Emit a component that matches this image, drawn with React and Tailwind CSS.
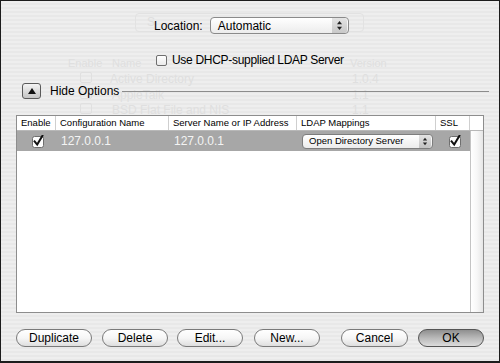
import React from 'react';

const font = "font-['Liberation_Sans',Arial,sans-serif]";

const Check = ({ checked }) => (
  <svg width="13" height="13" viewBox="0 0 13 13" className="block">
    <rect x="0.5" y="1.5" width="11" height="11" rx="2" fill="#fdfdfd" stroke="#6f6f6f" />
    {checked && (
      <path d="M2.6 6.4 L5.2 9.6 L10.4 0.8" fill="none" stroke="#111" strokeWidth="2" strokeLinecap="square" />
    )}
  </svg>
);

const Arrows = ({ w = 7 }) => (
  <svg width={w} height="11" viewBox="0 0 7 11" className="block">
    <path d="M3.5 1 L6 4.2 L1 4.2 Z" fill="#222" />
    <path d="M3.5 10 L6 6.8 L1 6.8 Z" fill="#222" />
  </svg>
);

const Button = ({ children, w, dark, className = '' }) => (
  <div
    className={`h-[18px] rounded-full border flex items-center justify-center text-[12px] text-black shrink-0 ${
      dark
        ? 'border-[#555] bg-gradient-to-b from-[#8f8f8f] via-[#b9b9b9] to-[#dcdcdc]'
        : 'border-[#7a7a7a] bg-gradient-to-b from-[#ffffff] via-[#f6f6f6] to-[#dedede]'
    } ${w} ${className}`}
  >
    {children}
  </div>
);

const Ghost = () => (
  <div className="absolute inset-0 text-[12px] text-[#dfdfdf] pointer-events-none">
    <div className="absolute left-[134px] top-[12px] w-[229px] h-[19px] rounded-[4px] border border-[#e2e2e2] text-[12px] pl-[11px] leading-[17px]">S</div>
    <div className="absolute left-[67px] top-[54px] text-[11px]">Enable</div>
    <div className="absolute left-[111px] top-[54px] text-[11px]">Name</div>
    <div className="absolute left-[349px] top-[54px] text-[11px]">Version</div>
    <div className="absolute left-[79px] top-[71px] w-[12px] h-[11px] border border-[#e0e0e0] rounded-[2px]" />
    <div className="absolute left-[109px] top-[69px]">Active Directory</div>
    <div className="absolute left-[351px] top-[69px]">1.0.4</div>
    <div className="absolute left-[79px] top-[87px] w-[12px] h-[11px] border border-[#e0e0e0] rounded-[2px]" />
    <div className="absolute left-[111px] top-[85px]">AppleTalk</div>
    <div className="absolute left-[351px] top-[85px]">1.1</div>
    <div className="absolute left-[79px] top-[102px] w-[12px] h-[11px] border border-[#e0e0e0] rounded-[2px]" />
    <div className="absolute left-[111px] top-[100px]">BSD Flat File and NIS</div>
    <div className="absolute left-[351px] top-[100px]">1.1</div>
  </div>
);

const cols = [
  { label: 'Enable', w: 'w-[39px]' },
  { label: 'Configuration Name', w: 'w-[113px]' },
  { label: 'Server Name or IP Address', w: 'w-[128px]' },
  { label: 'LDAP Mappings', w: 'w-[139px]' },
  { label: 'SSL', w: 'w-[34px]' },
];

export default function App() {
  return (
    <div
      className={`${font} w-[500px] h-[363px] relative overflow-hidden border-t border-x border-b-2 border-[#1c1c1c] bg-[repeating-linear-gradient(180deg,#eeeeee_0px,#eeeeee_2px,#e8e8e8_2px,#e8e8e8_4px)]`}
    >
      <Ghost />

      <div className="relative flex flex-col">
        {/* location */}
        <div className="flex items-center mt-[16px] pl-[153px] h-[17px]">
          <span className="text-[12px] text-black">Location:</span>
          <div className="ml-[7px] w-[139px] h-[17px] rounded-[4px] border border-[#8a8a8a] bg-gradient-to-b from-white to-[#ececec] flex items-center">
            <span className="pl-[7px] text-[12px] text-black flex-1">Automatic</span>
            <div className="w-[15px] h-[15px] mr-[1px] rounded-r-[3px] bg-gradient-to-b from-[#e4e4e4] to-[#c8c8c8] flex items-center justify-center">
              <Arrows />
            </div>
          </div>
        </div>

        {/* dhcp */}
        <div className="flex items-center mt-[20px] pl-[155px] h-[12px]">
          <div className="w-[11px] h-[11px] rounded-[2px] border border-[#6f6f6f] bg-gradient-to-b from-white to-[#eaeaea]" />
          <span className="ml-[5px] text-[12px] tracking-[-0.3px] text-black">Use DHCP-supplied LDAP Server</span>
        </div>

        {/* hide options */}
        <div className="flex items-center mt-[17px] pl-[21px] pr-[10px] h-[16px]">
          <div className="w-[19px] h-[16px] rounded-[3px] border border-[#5a5a5a] bg-gradient-to-b from-[#f4f4f4] to-[#c4c4c4] flex items-center justify-center">
            <svg width="8" height="6" viewBox="0 0 8 6"><path d="M4 0 L8 6 L0 6 Z" fill="#111" /></svg>
          </div>
          <span className="ml-[9px] text-[12px] text-black">Hide Options</span>
          <div className="flex-1 ml-[3px] h-px bg-[#8c8c8c]" />
        </div>

        {/* table */}
        <div className="mt-[16px] ml-[15px] w-[468px] h-[198px] border border-[#8d8d8d] bg-white flex flex-col">
          <div className="flex h-[15px] border-b border-[#b8b8b8] text-[9.5px] text-black leading-[14px]">
            {cols.map((c) => (
              <div key={c.label} className={`${c.w} shrink-0 border-r border-[#cfcfcf] pl-[4px] whitespace-nowrap overflow-hidden`}>
                {c.label}
              </div>
            ))}
            <div className="flex-1" />
          </div>
          <div className="flex flex-1">
            <div className="w-[453px] shrink-0">
              <div className="flex items-center h-[20px] bg-[#a7a7a7] text-[12px] text-[#f4f4f4]">
                <div className="w-[39px] shrink-0 flex justify-center pl-[3px]"><Check checked /></div>
                <div className="w-[113px] shrink-0 pl-[5px]">127.0.0.1</div>
                <div className="w-[128px] shrink-0 pl-[5px]">127.0.0.1</div>
                <div className="w-[139px] shrink-0 pl-[5px]">
                  <div className="w-[131px] h-[15px] rounded-[4px] border border-[#7d7d7d] bg-gradient-to-b from-white to-[#ececec] flex items-center">
                    <span className="pl-[6px] flex-1 text-[9.5px] text-black">Open Directory Server</span>
                    <div className="w-[12px] h-[13px] mr-[1px] rounded-r-[3px] bg-gradient-to-b from-[#e2e2e2] to-[#c2c2c2] flex items-center justify-center">
                      <Arrows w={6} />
                    </div>
                  </div>
                </div>
                <div className="w-[34px] shrink-0 flex justify-center pl-[4px]"><Check checked /></div>
              </div>
            </div>
            <div className="flex-1 border-l border-[#c4c4c4] bg-gradient-to-r from-white via-[#f7f7f7] to-[#e6e6e6]" />
          </div>
        </div>

        {/* buttons */}
        <div className="flex items-center mt-[16px] pl-[15px]">
          <Button w="w-[76px]">Duplicate</Button>
          <Button w="w-[66px]" className="ml-[10px]">Delete</Button>
          <Button w="w-[66px]" className="ml-[9px]">Edit...</Button>
          <Button w="w-[66px]" className="ml-[11px]">New...</Button>
          <Button w="w-[67px]" className="ml-[21px]">Cancel</Button>
          <Button w="w-[66px]" dark className="ml-[10px]">OK</Button>
        </div>
      </div>
    </div>
  );
}
